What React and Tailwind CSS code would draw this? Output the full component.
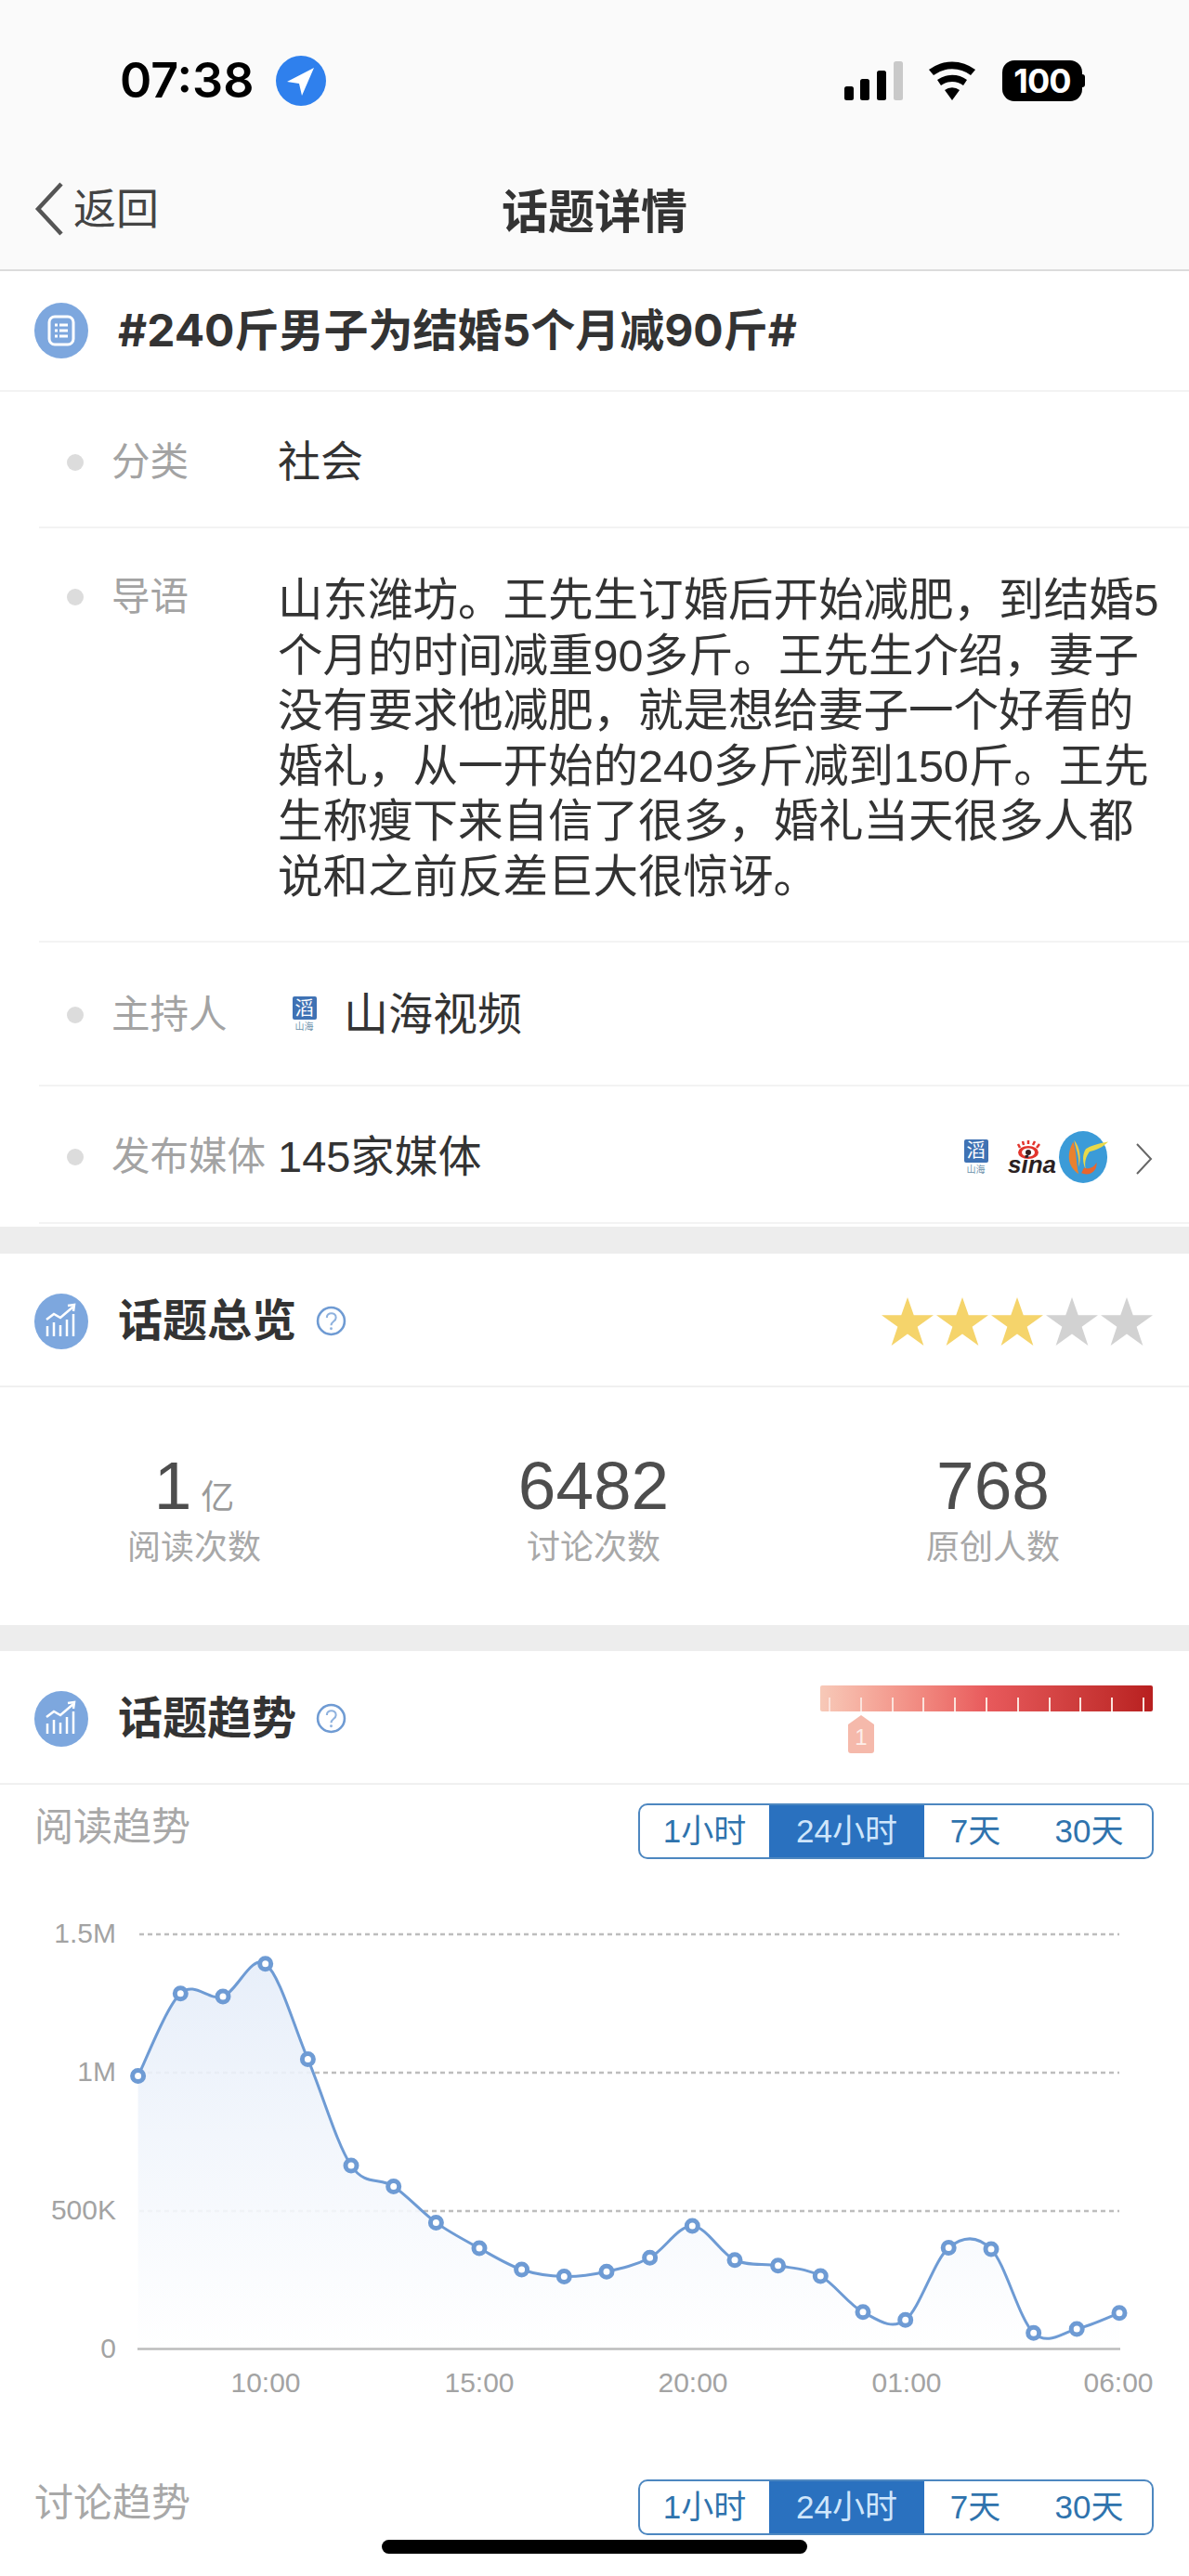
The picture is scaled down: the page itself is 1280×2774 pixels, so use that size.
import React from 'react'

const POINTS = [
  [148.6, 2236.6], [194.3, 2147.7], [240, 2151], [285.7, 2115.8], [331.4, 2218.4], [378, 2333],
  [423.7, 2355.5], [469.4, 2394.4], [516, 2422], [561.6, 2445], [607.3, 2452.5], [653, 2447.3],
  [699.6, 2432.3], [745.3, 2398], [791, 2434.7], [837.6, 2440.8], [883.3, 2452], [929, 2490.8],
  [974.7, 2499.3], [1021.2, 2421.6], [1067, 2423], [1112.7, 2513.3], [1159.2, 2509], [1205, 2491.8],
]

const smoothPath = (pts) => {
  let d = `M${pts[0][0]} ${pts[0][1]}`
  for (let i = 0; i < pts.length - 1; i++) {
    const p0 = pts[Math.max(i - 1, 0)]
    const p1 = pts[i]
    const p2 = pts[i + 1]
    const p3 = pts[Math.min(i + 2, pts.length - 1)]
    const c1x = p1[0] + (p2[0] - p0[0]) / 6
    const c1y = p1[1] + (p2[1] - p0[1]) / 6
    const c2x = p2[0] - (p3[0] - p1[0]) / 6
    const c2y = p2[1] - (p3[1] - p1[1]) / 6
    d += ` C${c1x} ${c1y} ${c2x} ${c2y} ${p2[0]} ${p2[1]}`
  }
  return d
}

const DocIcon = () => (
  <svg width="58" height="60" viewBox="0 0 58 60" className="shrink-0">
    <ellipse cx="29" cy="30" rx="29" ry="30" fill="#7da7de" />
    <rect x="16" y="15" width="26" height="30" rx="6" fill="none" stroke="#fff" strokeWidth="3" />
    <path d="M22 24h14M22 30h14M22 36h14" stroke="#fff" strokeWidth="3" />
    <path d="M26 22v16" stroke="#7da7de" strokeWidth="2" />
  </svg>
)

const TrendIcon = () => (
  <svg width="58" height="60" viewBox="0 0 58 60" className="shrink-0">
    <ellipse cx="29" cy="30" rx="29" ry="30" fill="#7da7de" />
    <path d="M14 46V35M21 46V31M28 46V34M35 46V28M42 46V22" stroke="#fff" strokeWidth="2.5" />
    <path d="M13 28l8-6 7 4 14-12" fill="none" stroke="#fff" strokeWidth="2.5" />
    <path d="M36 13l7-1-1 7" fill="none" stroke="#fff" strokeWidth="2.5" />
  </svg>
)

const HelpIcon = () => (
  <svg width="33" height="33" viewBox="0 0 32 32" className="shrink-0">
    <circle cx="16" cy="16" r="14" fill="none" stroke="#6f9bd3" strokeWidth="2.5" />
    <path d="M11.5 12.5c0-6 9.5-6 9.5 0 0 4-5 4-5 8" fill="none" stroke="#8fb2de" strokeWidth="2" />
    <circle cx="16" cy="24" r="1.4" fill="#8fb2de" />
  </svg>
)

const Star = ({ color }) => (
  <svg width="56" height="54" viewBox="0 0 58 54">
    <polygon points="29,0 36,20 58,20 40,33 47,54 29,41 11,54 18,33 0,20 22,20" fill={color} />
  </svg>
)

const HaiLogo = () => (
  <div className="flex flex-col items-center w-[27px] shrink-0">
    <div className="flex items-center justify-center w-[26px] h-[25px] bg-[#3f72b4] rounded-[2px] text-[20px] leading-none text-white">滔</div>
    <span className="mt-[2px] text-[10px] leading-[12px] text-[#6f93ad]">山海</span>
  </div>
)

const SinaLogo = () => (
  <div className="relative w-[52px] h-[34px] shrink-0">
    <svg width="26" height="22" viewBox="0 0 26 22" className="absolute left-[9px] top-[-2px]">
      <path d="M4 9L2 5M8 6L7 2M13 5V1M18 6L20 2M22 9L25 5" stroke="#e2342c" strokeWidth="2.5" />
      <ellipse cx="13" cy="14" rx="11" ry="7" fill="#e2342c" />
      <ellipse cx="13" cy="14" rx="7" ry="4.5" fill="#fff" />
      <circle cx="13" cy="14" r="3" fill="#3a2020" />
    </svg>
    <span className="absolute left-0 bottom-[-3px] text-[26px] leading-[24px] font-bold italic text-[#2b1f22]">sina</span>
  </div>
)

const CircleLogo = () => (
  <svg width="54" height="58" viewBox="0 0 56 58" className="shrink-0">
    <ellipse cx="27" cy="29" rx="27" ry="29" fill="#3b9bd8" />
    <path d="M16 12c-8 14-6 28 6 36-3-12-2-24-6-36z" fill="#e9812f" />
    <path d="M17 10c2 12 6 16 5 30 3-8 2-22-5-30z" fill="#f3c53c" />
    <path d="M30 20c4-3 14-6 25-8-6 6-14 10-21 11-4 6-6 12-4 20-4-8-4-17 0-23z" fill="#e9d94a" />
    <path d="M25 47c10 4 18-3 17-12-3 6-9 8-14 6z" fill="#e8662e" />
  </svg>
)

const Row = ({ label, className, children }) => (
  <div className={`flex ml-[42px] pl-[30px] border-b-2 border-[#f3f3f3] ${className}`}>
    <span className="w-[18px] h-[18px] rounded-full bg-[#dcdcdc] shrink-0" />
    <span className="ml-[30px] w-[179px] text-[41.5px] leading-[60px] text-[#a3a3a3] shrink-0">{label}</span>
    {children}
  </div>
)

const SectionHeader = ({ title, right }) => (
  <div className="flex items-center justify-between pl-[37px] pr-[39px] pt-[3px] h-[144px] border-b-2 border-[#f0f0f0]">
    <div className="flex items-center">
      <TrendIcon />
      <span className="ml-[32px] text-[48px] leading-none font-bold text-[#333]">{title}</span>
      <span className="ml-[21px]"><HelpIcon /></span>
    </div>
    {right}
  </div>
)

const Stat = ({ value, unit, label }) => (
  <div className="flex flex-col items-center">
    <div className="flex items-baseline h-[76px]">
      <span className="text-[73px] leading-[76px] text-[#4d4d4d]">{value}</span>
      {unit && <span className="ml-[10px] text-[36px] text-[#9a9a9a]">{unit}</span>}
    </div>
    <span className="mt-[7px] text-[36px] leading-[44px] text-[#a8a8a8]">{label}</span>
  </div>
)

const Tabs = () => (
  <div className="flex w-[555px] h-[60px] border-2 border-[#4d87c0] rounded-[10px] overflow-hidden text-[35px] text-[#2f73ad]">
    <div className="flex items-center justify-center w-[139px]">1小时</div>
    <div className="flex items-center justify-center w-[167px] bg-[#2a71bf] text-[#cfe6fb]">24小时</div>
    <div className="flex items-center justify-center w-[110px]">7天</div>
    <div className="flex items-center justify-center flex-1">30天</div>
  </div>
)

const Gauge = () => (
  <div className="flex flex-col items-start w-[358px] self-start mt-[34px]">
    <div className="flex items-end justify-between w-full h-[28px] px-[9px] rounded-[2px] bg-gradient-to-r from-[#f7c9b8] via-[#e85a5c] to-[#b81f1f]">
      {[0, 1, 2, 3, 4, 5, 6, 7, 8, 9, 10].map((i) => (
        <span key={i} className="w-[2px] h-[15px] bg-[#fbe3dc]" />
      ))}
    </div>
    <svg width="30" height="42" viewBox="0 0 30 42" className="ml-[29px] mt-[4px]">
      <path d="M15 0L29 10V38a3 3 0 0 1-3 3H4a3 3 0 0 1-3-3V10z" fill="#f5b9ab" />
      <text x="15" y="32" textAnchor="middle" fontSize="24" fill="#fdeee9">1</text>
    </svg>
  </div>
)

const Chart = () => {
  const line = smoothPath(POINTS)
  const area = `${line} L1205 2530.6 L148.6 2530.6 Z`
  return (
    <svg width="1280" height="560" viewBox="0 2040 1280 560" className="block">
      <defs>
        <linearGradient id="areaFill" x1="0" y1="0" x2="0" y2="1">
          <stop offset="0" stopColor="#e5edf9" />
          <stop offset="1" stopColor="#ffffff" />
        </linearGradient>
      </defs>
      {[2084, 2233, 2382].map((y) => (
        <line key={y} x1="150" x2="1205" y1={y} y2={y} stroke="#bdbdbd" strokeWidth="2.5" strokeDasharray="5 4" />
      ))}
      <path d={area} fill="url(#areaFill)" fillOpacity="0.9" />
      <line x1="148" x2="1206" y1="2530.6" y2="2530.6" stroke="#bdbdbd" strokeWidth="2.5" />
      <path d={line} fill="none" stroke="#6e9bd4" strokeWidth="3" />
      {POINTS.map(([x, y]) => (
        <circle key={x} cx={x} cy={y} r="6" fill="#fff" stroke="#6e9bd4" strokeWidth="5" />
      ))}
      <g fill="#a3a3a3" fontSize="30" textAnchor="end">
        <text x="125" y="2093">1.5M</text>
        <text x="125" y="2242">1M</text>
        <text x="125" y="2391">500K</text>
        <text x="125" y="2540">0</text>
      </g>
      <g fill="#a3a3a3" fontSize="30" textAnchor="middle">
        <text x="286" y="2577">10:00</text>
        <text x="516" y="2577">15:00</text>
        <text x="746" y="2577">20:00</text>
        <text x="976" y="2577">01:00</text>
        <text x="1204" y="2577">06:00</text>
      </g>
    </svg>
  )
}

export default function App() {
  return (
    <div className="relative w-[1280px] h-[2774px] overflow-hidden bg-white [font-family:'Liberation_Sans','Noto_Sans_CJK_SC',sans-serif]">
      <div className="bg-[#fafafa] border-b-2 border-[#dcdcdc] h-[292px]">
        {/* status bar */}
        <div className="flex items-center justify-between pl-[129px] pr-[112px] h-[174px]">
          <div className="flex items-center">
            <span className="text-[52px] leading-none font-semibold text-black [font-family:Inter,sans-serif]">07:38</span>
            <svg width="54" height="54" viewBox="0 0 54 54" className="ml-[24px]">
              <circle cx="27" cy="27" r="27" fill="#2f80ed" />
              <path d="M41 13L12 28l13 2 3 13z" fill="#fff" />
            </svg>
          </div>
          <div className="flex items-center">
            <svg width="64" height="42" viewBox="0 0 64 42">
              <rect x="0" y="27" width="10" height="15" rx="2.5" fill="#000" />
              <rect x="17" y="19" width="10" height="23" rx="2.5" fill="#000" />
              <rect x="35" y="10" width="10" height="32" rx="2.5" fill="#000" />
              <rect x="53" y="0" width="10" height="42" rx="2.5" fill="#c9c9c9" />
            </svg>
            <svg width="58" height="42" viewBox="0 0 58 42" className="ml-[23px]">
              <path d="M29 42L21 31a13 13 0 0 1 16 0z" fill="#000" />
              <path d="M17 26a20 20 0 0 1 24 0l4-6a27 27 0 0 0-32 0z" fill="#000" />
              <path d="M9 15a33 33 0 0 1 40 0l5-6a41 41 0 0 0-50 0z" fill="#000" />
            </svg>
            <div className="flex items-center ml-[25px]">
              <div className="flex items-center justify-center w-[86px] h-[44px] rounded-[13px] bg-black text-white text-[36px] font-bold leading-none [font-family:Inter,sans-serif] tracking-tight">100</div>
              <span className="w-[3px] h-[14px] rounded-r-full bg-black" />
            </div>
          </div>
        </div>
        {/* nav bar */}
        <div className="relative flex items-center justify-center h-[117px] pb-[8px]">
          <div className="absolute left-[37px] top-[22px] flex items-center">
            <svg width="32" height="58" viewBox="0 0 32 58">
              <path d="M29 2L4 29l25 27" fill="none" stroke="#555" strokeWidth="4.5" />
            </svg>
            <span className="ml-[10px] text-[46px] leading-none text-[#444]">返回</span>
          </div>
          <span className="text-[50px] leading-none font-bold text-[#333]">话题详情</span>
        </div>
      </div>

      <div className="flex items-center pl-[37px] h-[130px] border-b-2 border-[#f3f3f3]">
        <DocIcon />
        <span className="ml-[32px] text-[48px] leading-none font-bold text-[#333] [font-family:Inter,'Noto_Sans_CJK_SC',sans-serif]">#240斤男子为结婚5个月减90斤#</span>
      </div>

      <Row label="分类" className="items-center pt-[6px] h-[147px]">
        <span className="text-[46px] text-[#333]">社会</span>
      </Row>
      <div className="flex ml-[42px] pl-[30px] pt-[48px] h-[446px] border-b-2 border-[#f3f3f3]">
        <span className="mt-[17px] w-[18px] h-[18px] rounded-full bg-[#dcdcdc] shrink-0" />
        <span className="ml-[30px] w-[179px] text-[41.5px] leading-[60px] text-[#a3a3a3] shrink-0 mt-[-4px]">导语</span>
        <div className="text-[48.5px] leading-[59.5px] text-[#333] whitespace-nowrap">
          <div>山东潍坊。王先生订婚后开始减肥，到结婚5</div>
          <div>个月的时间减重90多斤。王先生介绍，妻子</div>
          <div>没有要求他减肥，就是想给妻子一个好看的</div>
          <div>婚礼，从一开始的240多斤减到150斤。王先</div>
          <div>生称瘦下来自信了很多，婚礼当天很多人都</div>
          <div>说和之前反差巨大很惊讶。</div>
        </div>
      </div>
      <Row label="主持人" className="items-center pt-[2px] h-[155px]">
        <span className="ml-[15px]"><HaiLogo /></span>
        <span className="ml-[29px] text-[48px] text-[#333]">山海视频</span>
      </Row>
      <Row label="发布媒体" className="items-center pt-[6px] h-[148px] pr-[39px]">
        <span className="text-[47px] text-[#333] whitespace-nowrap">145家媒体</span>
        <div className="flex items-center ml-auto">
          <HaiLogo />
          <span className="ml-[21px]"><SinaLogo /></span>
          <span className="ml-[3px]"><CircleLogo /></span>
          <svg width="18" height="34" viewBox="0 0 18 34" className="ml-[29px] mt-[4px]">
            <path d="M1 1l15 16L1 33" fill="none" stroke="#666" strokeWidth="2" />
          </svg>
        </div>
      </Row>

      <div className="mt-[3px] h-[29px] bg-[#ededed]" />

      <SectionHeader
        title="话题总览"
        right={
          <div className="flex gap-[3px]">
            <Star color="#f5d46b" />
            <Star color="#f5d46b" />
            <Star color="#f5d46b" />
            <Star color="#d2d2d2" />
            <Star color="#d2d2d2" />
          </div>
        }
      />
      <div className="grid grid-cols-[430px_430px_430px] -ml-[6px] pt-[68px] h-[256px]">
        <Stat value="1" unit="亿" label="阅读次数" />
        <Stat value="6482" label="讨论次数" />
        <Stat value="768" label="原创人数" />
      </div>
      <div className="h-[28px] bg-[#ededed]" />

      <SectionHeader title="话题趋势" right={<Gauge />} />

      <div className="flex items-start justify-between pl-[37px] pr-[38px] pt-[20px] h-[117px]">
        <span className="mt-[2px] text-[42px] leading-[48px] text-[#a8a8a8]">阅读趋势</span>
        <Tabs />
      </div>
      <Chart />
      <div className="flex items-center justify-between pl-[37px] pr-[38px] pt-[71px]">
        <span className="mb-[8px] text-[42px] leading-[48px] text-[#a8a8a8]">讨论趋势</span>
        <Tabs />
      </div>

      {/* home indicator */}
      <div className="absolute left-[411px] top-[2735px] w-[458px] h-[15px] rounded-full bg-black" />
    </div>
  )
}
